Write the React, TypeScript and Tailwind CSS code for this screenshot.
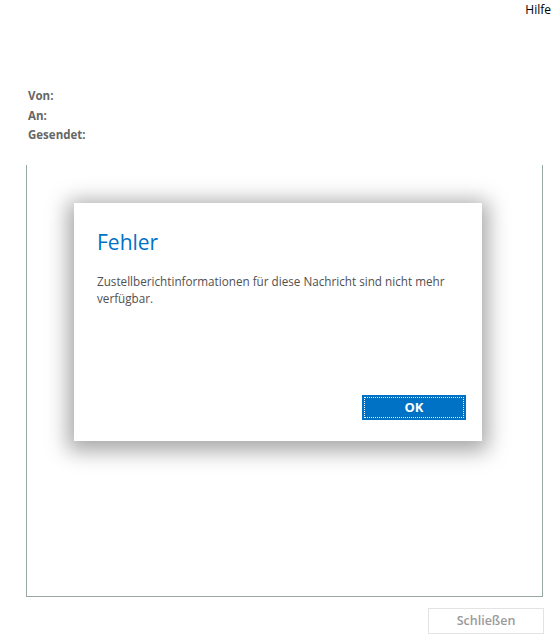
import React from 'react';

const font = { fontFamily: '"Segoe UI", "Open Sans", "Noto Sans", sans-serif' };

const HeaderFields: React.FC = () => (
  <div className="ml-[28px] mt-[68px] flex flex-col text-[11.5px] font-bold leading-[19.5px] text-[#666666]">
    <div>Von:</div>
    <div>An:</div>
    <div>Gesendet:</div>
  </div>
);

const ErrorDialog: React.FC = () => (
  <div className="absolute left-[74px] top-[203px] flex h-[238px] w-[408px] flex-col bg-white px-[23px] pb-[21px] pt-[25px] shadow-[0_4px_20px_6px_rgba(0,0,0,0.35)]">
    <h1 className="text-[21px] leading-[28px] text-[#0072c6]">Fehler</h1>
    <p className="mt-[17px] text-[11.7px] font-medium leading-[17px] text-[#505050]">
      Zustellberichtinformationen für diese Nachricht sind nicht mehr verfügbar.
    </p>
    <div className="mt-auto flex justify-end">
      <button className="mr-[-7px] h-[25px] w-[104px] bg-[#0072c6] p-[2px]">
        <span className="flex h-full w-full items-center justify-center border border-dotted border-white text-[13px] font-bold text-white">
          OK
        </span>
      </button>
    </div>
  </div>
);

export default function App() {
  return (
    <div className="relative h-[642px] w-[557px] overflow-hidden bg-white" style={font}>
      <div className="flex justify-end pr-[6px] pt-[2px] text-[12px] leading-[16px] text-black">Hilfe</div>
      <HeaderFields />
      <div className="ml-[26px] mr-[14px] mt-[20px] h-[432px] border-x border-b border-[#98a8a4]" />
      <div className="mr-[13px] mt-[11px] flex justify-end">
        <button className="h-[26px] w-[116px] border border-[#e3e3e3] bg-white pt-[2px] text-[12.5px] font-semibold text-[#9a9a9a]">
          Schließen
        </button>
      </div>
      <ErrorDialog />
    </div>
  );
}
